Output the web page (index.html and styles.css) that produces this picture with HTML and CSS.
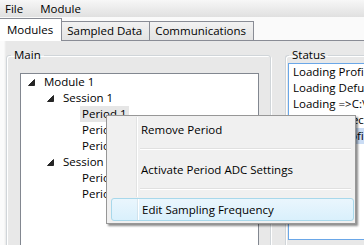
FILE: index.html
```html
<!DOCTYPE html>
<html>
<head>
<meta charset="utf-8">
<link rel="stylesheet" href="styles.css">
</head>
<body>
<div class="menubar"><span>File</span><span>Module</span></div>
<div class="tabstrip">
  <div class="tab active">Modules</div>
  <div class="tab">Sampled Data</div>
  <div class="tab">Communications</div>
</div>
<div class="panel">
  <fieldset class="group main">
    <legend>Main</legend>
    <div class="tree">
      <div class="row l0"><span class="exp"><svg width="7" height="7" viewBox="0 0 7 7"><polygon points="6.5,0.5 6.5,6.5 0.5,6.5" fill="#262626" stroke="#262626" stroke-width="1" stroke-linejoin="round"/></svg></span><span class="lbl">Module 1</span></div>
      <div class="row l1"><span class="exp"><svg width="7" height="7" viewBox="0 0 7 7"><polygon points="6.5,0.5 6.5,6.5 0.5,6.5" fill="#262626" stroke="#262626" stroke-width="1" stroke-linejoin="round"/></svg></span><span class="lbl">Session 1</span></div>
      <div class="row l2"><span class="exp"></span><span class="lbl sel">Period 1</span></div>
      <div class="row l2"><span class="exp"></span><span class="lbl">Period 2</span></div>
      <div class="row l2"><span class="exp"></span><span class="lbl">Period 3</span></div>
      <div class="row l1"><span class="exp"><svg width="7" height="7" viewBox="0 0 7 7"><polygon points="6.5,0.5 6.5,6.5 0.5,6.5" fill="#262626" stroke="#262626" stroke-width="1" stroke-linejoin="round"/></svg></span><span class="lbl">Session 2</span></div>
      <div class="row l2"><span class="exp"></span><span class="lbl">Period 1</span></div>
      <div class="row l2"><span class="exp"></span><span class="lbl">Period 2</span></div>
    </div>
  </fieldset>
  <div class="splitter"></div>
  <fieldset class="group status">
    <legend>Status</legend>
    <div class="list">
      <div class="item">Loading Profile Settings</div>
      <div class="item">Loading Defult ADC Settings</div>
      <div class="item">Loading =&gt;C:\Settings\profile.xml</div>
      <div class="item">Loading Spec Settings</div>
      <div class="item hl">Loading Profile Complete</div>
    </div>
  </fieldset>
</div>
<div class="ctx">
  <div class="mi"><span class="gut"></span><span class="mt">Remove Period</span></div>
  <div class="sep"><span class="gut"></span><span class="line"></span></div>
  <div class="mi"><span class="gut"></span><span class="mt">Activate Period ADC Settings</span></div>
  <div class="sep"><span class="gut"></span><span class="line"></span></div>
  <div class="mi hot"><span class="gut"></span><span class="mt">Edit Sampling Frequency</span></div>
</div>
</body>
</html>
```
FILE: styles.css
```css
* { box-sizing: border-box; }
body {
  margin: 0;
  width: 364px;
  height: 245px;
  overflow: hidden;
  position: relative;
  font-family: "Open Sans", "Noto Sans", sans-serif;
  font-size: 11.5px;
  color: #000;
  background: #e8e8e8;
}
.menubar {
  height: 17px;
  display: flex;
  align-items: center;
  gap: 17px;
  padding-left: 5px;
  background: linear-gradient(#f7f7f7, #e0e0e0);
  line-height: 17px;
}
.tabstrip {
  height: 24px;
  display: flex;
  align-items: flex-end;
  background: #fafafa;
  border-bottom: 1px solid #898c95;
}
.tab {
  height: 19px;
  line-height: 18px;
  padding: 0 7px 0 5px;
  border: 1px solid #898c95;
  border-bottom: none;
  margin-left: -1px;
  background: linear-gradient(#f2f2f2, #e3e3e3);
}
.tab.active {
  height: 23px;
  line-height: 22px;
  margin-left: 0;
  margin-bottom: -1px;
  padding: 0 8px 0 7px;
  border-left: none;
  background: #fff;
  position: relative;
  z-index: 1;
}
.panel {
  display: flex;
  align-items: flex-start;
  padding: 6px 0 0 6px;
  height: 204px;
  overflow: hidden;
  background: linear-gradient(90deg, #fbfbfb 0px, #fbfbfb 4px, #e8e8e8 6px);
}
.group {
  margin: 0;
  border: 1px solid #d0d5d9;
  border-radius: 3px;
  box-shadow: inset 1px 1px 0 #fff, 1px 1px 0 #fff;
  min-width: 0;
  height: 210px;
}
.group legend {
  padding: 0 3px;
  line-height: 16px;
  height: 16px;
}
.main {
  width: 265px;
  flex: none;
  padding: 10px 11px 0 13px;
}
.main legend { margin-left: -9px; }
.splitter {
  width: 14px;
  flex: none;
}
.status {
  flex: 1;
  padding: 0 0 0 2px;
  border-right: none;
  border-radius: 3px 0 0 3px;
}
.status legend { margin-left: 1px; }
.tree {
  background: #fff;
  border: 1px solid #828790;
  height: 190px;
}
.row {
  height: 16px;
  line-height: 16px;
  display: flex;
  align-items: center;
  white-space: nowrap;
}
.row.l0 { padding-left: 7px; }
.row.l1 { padding-left: 26px; }
.row.l2 { padding-left: 45px; }
.exp {
  width: 14px;
  height: 16px;
  flex: none;
  display: flex;
  align-items: center;
  justify-content: flex-start;
}
.lbl { padding: 0 2px; }
.lbl.sel { background: #e6e6e6; }
.list {
  background: #fff;
  border: 1px solid #6aa7e8;
  border-right: none;
  height: 177px;
  padding-top: 0;
}
.item {
  height: 16px;
  line-height: 16px;
  padding-left: 4px;
  white-space: nowrap;
  overflow: hidden;
}
.item.hl { background: #cadcf4; }
.ctx {
  position: absolute;
  left: 106px;
  top: 115px;
  width: 250px;
  height: 109px;
  background: #f0f0f0;
  border: 1px solid #979797;
  box-shadow: 2px 2px 2px rgba(0,0,0,0.45);
  padding: 1px 2px 2px 2px;
}
.mi {
  height: 24px;
  display: flex;
  align-items: center;
  position: relative;
}
.gut {
  width: 28px;
  flex: none;
  align-self: stretch;
  border-right: 1px solid #e2e3e3;
  box-shadow: 1px 0 0 #fff;
}
.mt { padding-left: 4px; }
.mi.hot {
  margin: 1px 0 0 2px;
  height: 23px;
  width: 243px;
  border: 1px solid #a8d8eb;
  border-radius: 3px;
  background: linear-gradient(#eaf6fd, #d9f0fc);
}
.mi.hot .gut { width: 26px; border-right-color: rgba(0,0,0,0.06); }
.sep {
  height: 16px;
  display: flex;
  align-items: center;
}
.sep .gut { height: 16px; }
.sep .line {
  flex: 1;
  height: 2px;
  margin: 0 2px 0 3px;
  border-top: 1px solid #e0e0e0;
  border-bottom: 1px solid #fff;
}
```
